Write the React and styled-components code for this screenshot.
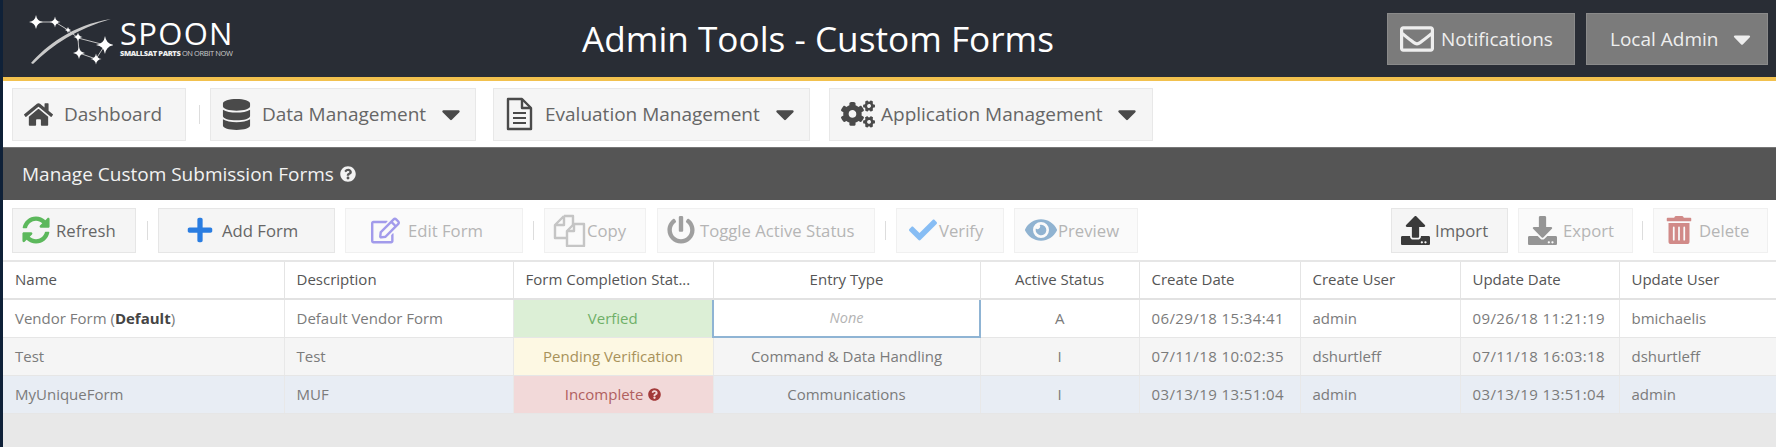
import React from "react"
import styled, { createGlobalStyle } from "styled-components"
import {
  FaHome, FaDatabase, FaCogs, FaCaretDown, FaRegEnvelope, FaSyncAlt, FaPlus,
  FaRegEdit, FaPowerOff, FaCheck, FaEye, FaUpload, FaDownload, FaTrashAlt, FaQuestionCircle
} from "react-icons/fa"

const GlobalStyle = createGlobalStyle`
  html, body {
    margin: 0;
    height: 100%;
    overflow: hidden;
    background: #0f2138;
    font-family: "Open Sans", "Liberation Sans", sans-serif;
  }
  #root { height: 100%; }
`

const Page = styled.div`
  height: 447px;
  margin-left: 3px;
  display: flex;
  flex-direction: column;
  background: #e8e8e8;
  color: #666;
`

const Header = styled.header`
  height: 77px;
  flex: none;
  box-sizing: content-box;
  background: #292d35;
  border-bottom: 4px solid #f2c14e;
  display: flex;
  align-items: center;
  padding: 0 8px 0 25px;
`

const Logo = styled.div`
  width: 350px;
  display: flex;
  align-items: center;
  gap: 7px;
  color: #fff;
`

const LogoWords = styled.div`
  display: flex;
  flex-direction: column;
  width: 114px;
  gap: 2px;
`

const LogoName = styled.span`
  font: 400 31px/27px "Open Sans", sans-serif;
  letter-spacing: 1.3px;
`

const LogoTag = styled.span`
  font: 400 7.5px/9px "Open Sans", sans-serif;
  letter-spacing: -0.4px;
  white-space: nowrap;
  color: #ccc;
  b { font-weight: 800; color: #eee; }
`

const Title = styled.h1`
  margin: 0;
  width: 880px;
  text-align: center;
  font-weight: 400;
  font-size: 35.2px;
  color: #fff;
  transform: translateY(-1px);
`

const HeaderActions = styled.div`
  margin-left: auto;
  display: flex;
  gap: 11px;
`

const HeaderButton = styled.div`
  box-sizing: border-box;
  width: ${p => p.$w}px;
  height: 52px;
  padding-left: ${p => p.$pl}px;
  display: flex;
  align-items: center;
  gap: ${p => p.$gap}px;
  background: #7b7b7b;
  border: 1px solid #8a8a8a;
  color: #eee;
  font-size: 19px;
  white-space: nowrap;
`

const Nav = styled.nav`
  height: 66px;
  flex: none;
  background: #fff;
  display: flex;
  align-items: center;
  gap: 10px;
  padding: 0 9px 0 9px;
  box-sizing: border-box;
`

const NavButton = styled.div`
  box-sizing: border-box;
  width: ${p => p.$w}px;
  height: 53px;
  margin-left: ${p => p.$ml || 0}px;
  padding-left: ${p => p.$pl}px;
  display: flex;
  align-items: center;
  gap: ${p => p.$gap}px;
  background: #f5f5f5;
  border: 1px solid #e8e8e8;
  color: #666;
  font-size: 19px;
  white-space: nowrap;
  svg { color: #4a4a4a; flex: none; }
`

const NavCaret = styled(FaCaretDown)`
  margin-left: ${p => p.$ml}px;
  font-size: 30px;
`

const Sep = styled.span`
  width: 1px;
  height: 19px;
  flex: none;
  margin-left: ${p => p.$ml || 0}px;
  background: #ddd;
`

const PanelTitle = styled.div`
  height: 53px;
  flex: none;
  box-sizing: border-box;
  background: #555;
  border-top: 1px solid #777;
  color: #f2f2f2;
  font-size: 19px;
  display: flex;
  align-items: center;
  gap: 6px;
  padding-left: 19px;
  svg { font-size: 16px; }
`

const Toolbar = styled.div`
  height: 60px;
  flex: none;
  box-sizing: border-box;
  background: #fff;
  display: flex;
  align-items: center;
  gap: 10px;
  padding: 0 8px 0 9px;
`

const ToolButton = styled.div`
  box-sizing: border-box;
  width: ${p => p.$w}px;
  height: 45px;
  margin-left: ${p => p.$ml || 0}px;
  padding-left: ${p => p.$pl}px;
  display: flex;
  align-items: center;
  gap: ${p => p.$gap}px;
  background: #f5f5f5;
  border: 1px solid #e6e6e6;
  color: #666;
  font-size: 16.7px;
  white-space: nowrap;
  ${p => p.$off && `
    background: #fafafa;
    border-color: #f0f0f0;
    color: #b5b5b5;
    svg { opacity: 0.55; }
  `}
`

const ToolIcon = styled.span`
  display: flex;
  flex: none;
  font-size: ${p => p.$size}px;
  color: ${p => p.$color};
`

const RightTools = styled.div`
  margin-left: auto;
  display: flex;
  align-items: center;
  gap: 10px;
`

const Table = styled.table`
  width: 1773px;
  flex: none;
  table-layout: fixed;
  border-collapse: collapse;
  font-size: 15px;
`

const Col = styled.col`
  width: ${p => p.$w}px;
`

const Th = styled.th`
  height: 38px;
  padding: 0 12px 2px;
  box-sizing: border-box;
  background: #fff;
  border-top: 2px solid #e6e6e6;
  border-bottom: 2px solid #e2e2e2;
  border-right: 1px solid #e4e4e4;
  font-weight: 400;
  color: #555;
  text-align: ${p => p.$center ? "center" : "left"};
  white-space: nowrap;
  overflow: hidden;
`

const Row = styled.tr`
  height: 38px;
  background: ${p => p.$bg};
`

const Td = styled.td`
  padding: 0 12px 1px;
  box-sizing: border-box;
  border-right: 1px solid #e8e8e8;
  border-bottom: 1px solid #e6e6e6;
  color: #7b7b7b;
  text-align: ${p => p.$center ? "center" : "left"};
  white-space: nowrap;
  overflow: hidden;
  b { color: #444; font-weight: 700; }
`

const DateCell = styled(Td)`
  letter-spacing: 0.4px;
`

const StatusCell = styled(Td)`
  text-align: center;
  background: ${p => p.$bg};
  color: ${p => p.$color};
  svg { font-size: 13px; vertical-align: -1px; color: #a33a3a; margin-left: 1px; }
`

const ActiveCell = styled(Td)`
  text-align: center;
  border: 2px solid #8fb4d4;
  color: #b4b4b4;
  font-style: italic;
  font-size: 14.5px;
`

// files-o and file-text-o from the old icon set, not in the package
const CopyIcon = () => (
  <svg width="33" height="33" viewBox="0 0 33 33" fill="none" stroke="#9a9a9a" strokeWidth="2.4" strokeLinejoin="round">
    <path d="M11 2H20V11M11 2L2 11V24H13M2 11H11V2" />
    <path d="M21 10H31V32H14V17Z" fill="#fafafa" />
    <path d="M14 17H21V10" />
  </svg>
)

const FileIcon = () => (
  <svg width="28" height="34" viewBox="0 0 28 34" fill="none" stroke="#4a4a4a" strokeWidth="2.4" strokeLinejoin="round">
    <path d="M3 2H17L26 11V32H3Z" />
    <path d="M17 2V11H26" />
    <path d="M8 16H21M8 21H21M8 26H21" strokeWidth="2" />
  </svg>
)

const star = (x, y, r) =>
  `M${x} ${y - r}Q${x + r * 0.12} ${y - r * 0.12} ${x + r} ${y}Q${x + r * 0.12} ${y + r * 0.12} ${x} ${y + r}Q${x - r * 0.12} ${y + r * 0.12} ${x - r} ${y}Q${x - r * 0.12} ${y - r * 0.12} ${x} ${y - r}Z`

const Constellation = () => (
  <svg width="85" height="52" viewBox="28 14 85 52">
    <path d="M31 64C46 47 72 26 111 20C78 29 52 46 33 65Z" fill="#c9c9c9" />
    <path d="M36 23H55L68 31L78 39L105 46L96 60L79 54L78 39" fill="none" stroke="#cfcfcf" strokeWidth="0.9" />
    <path d={star(36, 23, 7)} fill="#fff" />
    <path d={star(55, 23, 5.5)} fill="#fff" />
    <path d={star(68, 31, 3)} fill="#fff" />
    <path d={star(78, 38, 4.5)} fill="#fff" />
    <path d={star(105, 46, 9)} fill="#fff" />
    <path d={star(79, 54, 6)} fill="#fff" />
    <path d={star(96, 60, 5.5)} fill="#fff" />
  </svg>
)

const columns = [
  { label: "Name", w: 281 },
  { label: "Description", w: 229 },
  { label: "Form Completion Stat...", w: 200 },
  { label: "Entry Type", w: 267, center: true },
  { label: "Active Status", w: 159, center: true },
  { label: "Create Date", w: 161 },
  { label: "Create User", w: 160 },
  { label: "Update Date", w: 159 },
  { label: "Update User", w: 157 }
]

const App = () => (
  <>
    <GlobalStyle />
    <Page>
      <Header>
        <Logo>
          <Constellation />
          <LogoWords>
            <LogoName>SPOON</LogoName>
            <LogoTag><b>SMALLSAT PARTS</b> ON ORBIT NOW</LogoTag>
          </LogoWords>
        </Logo>
        <Title>Admin Tools - Custom Forms</Title>
        <HeaderActions>
          <HeaderButton $w={188} $pl={12} $gap={7}><FaRegEnvelope size={34} />Notifications</HeaderButton>
          <HeaderButton $w={182} $pl={23} $gap={10}>Local Admin<FaCaretDown size={28} /></HeaderButton>
        </HeaderActions>
      </Header>

      <Nav>
        <NavButton $w={174} $pl={11} $gap={11}><FaHome size={29} />Dashboard</NavButton>
        <Sep $ml={3} />
        <NavButton $w={266} $pl={10} $gap={10}>
          <FaDatabase size={31} />Data Management<NavCaret $ml={-0.5} />
        </NavButton>
        <NavButton $w={317} $pl={11} $gap={12} $ml={7}>
          <FileIcon />Evaluation Management<NavCaret $ml={-1.5} />
        </NavButton>
        <NavButton $w={324} $pl={11} $gap={6} $ml={9}>
          <FaCogs size={34} />Application Management<NavCaret $ml={3.5} />
        </NavButton>
      </Nav>

      <PanelTitle>Manage Custom Submission Forms <FaQuestionCircle /></PanelTitle>

      <Toolbar>
        <ToolButton $w={124} $pl={9} $gap={6}>
          <ToolIcon $size={28} $color="#5cb85c"><FaSyncAlt /></ToolIcon>Refresh
        </ToolButton>
        <Sep $ml={1} />
        <ToolButton $w={177} $pl={27} $gap={8}>
          <ToolIcon $size={28} $color="#2a7de1"><FaPlus /></ToolIcon>Add Form
        </ToolButton>
        <ToolButton $w={178} $pl={25} $gap={8} $off>
          <ToolIcon $size={29} $color="#5b4fe0"><FaRegEdit /></ToolIcon>Edit Form
        </ToolButton>
        <Sep />
        <ToolButton $w={102} $pl={8} $gap={1} $off><CopyIcon />Copy</ToolButton>
        <ToolButton $w={218} $pl={9} $gap={5} $off $ml={1}>
          <ToolIcon $size={28} $color="#555"><FaPowerOff /></ToolIcon>Toggle Active Status
        </ToolButton>
        <Sep />
        <ToolButton $w={108} $pl={12} $gap={2} $off>
          <ToolIcon $size={28} $color="#2a8cf0"><FaCheck /></ToolIcon>Verify
        </ToolButton>
        <ToolButton $w={124} $pl={10} $gap={1} $off>
          <ToolIcon $size={32} $color="#3a7ab0"><FaEye /></ToolIcon>Preview
        </ToolButton>
        <RightTools>
          <ToolButton $w={117} $pl={9} $gap={5}>
            <ToolIcon $size={29} $color="#3a3a3a"><FaUpload /></ToolIcon>Import
          </ToolButton>
          <ToolButton $w={115} $pl={9} $gap={6} $off>
            <ToolIcon $size={29} $color="#444"><FaDownload /></ToolIcon>Export
          </ToolButton>
          <Sep $ml={-1} />
          <ToolButton $w={115} $pl={11} $gap={6} $off>
            <ToolIcon $size={28} $color="#b0302c"><FaTrashAlt /></ToolIcon>Delete
          </ToolButton>
        </RightTools>
      </Toolbar>

      <Table>
        <colgroup>
          {columns.map(c => <Col key={c.label} $w={c.w} />)}
        </colgroup>
        <thead>
          <tr>
            {columns.map(c => <Th key={c.label} $center={c.center}>{c.label}</Th>)}
          </tr>
        </thead>
        <tbody>
          <Row $bg="#fff">
            <Td>Vendor Form (<b>Default</b>)</Td>
            <Td>Default Vendor Form</Td>
            <StatusCell $bg="#dcefd6" $color="#6fb068">Verfied</StatusCell>
            <ActiveCell>None</ActiveCell>
            <Td $center>A</Td>
            <DateCell>06/29/18 15:34:41</DateCell>
            <Td>admin</Td>
            <DateCell>09/26/18 11:21:19</DateCell>
            <Td>bmichaelis</Td>
          </Row>
          <Row $bg="#f5f5f5">
            <Td>Test</Td>
            <Td>Test</Td>
            <StatusCell $bg="#fdf8e3" $color="#a8925a">Pending Verification</StatusCell>
            <Td $center>Command &amp; Data Handling</Td>
            <Td $center>I</Td>
            <DateCell>07/11/18 10:02:35</DateCell>
            <Td>dshurtleff</Td>
            <DateCell>07/11/18 16:03:18</DateCell>
            <Td>dshurtleff</Td>
          </Row>
          <Row $bg="#e8edf4">
            <Td>MyUniqueForm</Td>
            <Td>MUF</Td>
            <StatusCell $bg="#f2d9d9" $color="#b0605f">Incomplete <FaQuestionCircle /></StatusCell>
            <Td $center>Communications</Td>
            <Td $center>I</Td>
            <DateCell>03/13/19 13:51:04</DateCell>
            <Td>admin</Td>
            <DateCell>03/13/19 13:51:04</DateCell>
            <Td>admin</Td>
          </Row>
        </tbody>
      </Table>
    </Page>
  </>
)

export default App
